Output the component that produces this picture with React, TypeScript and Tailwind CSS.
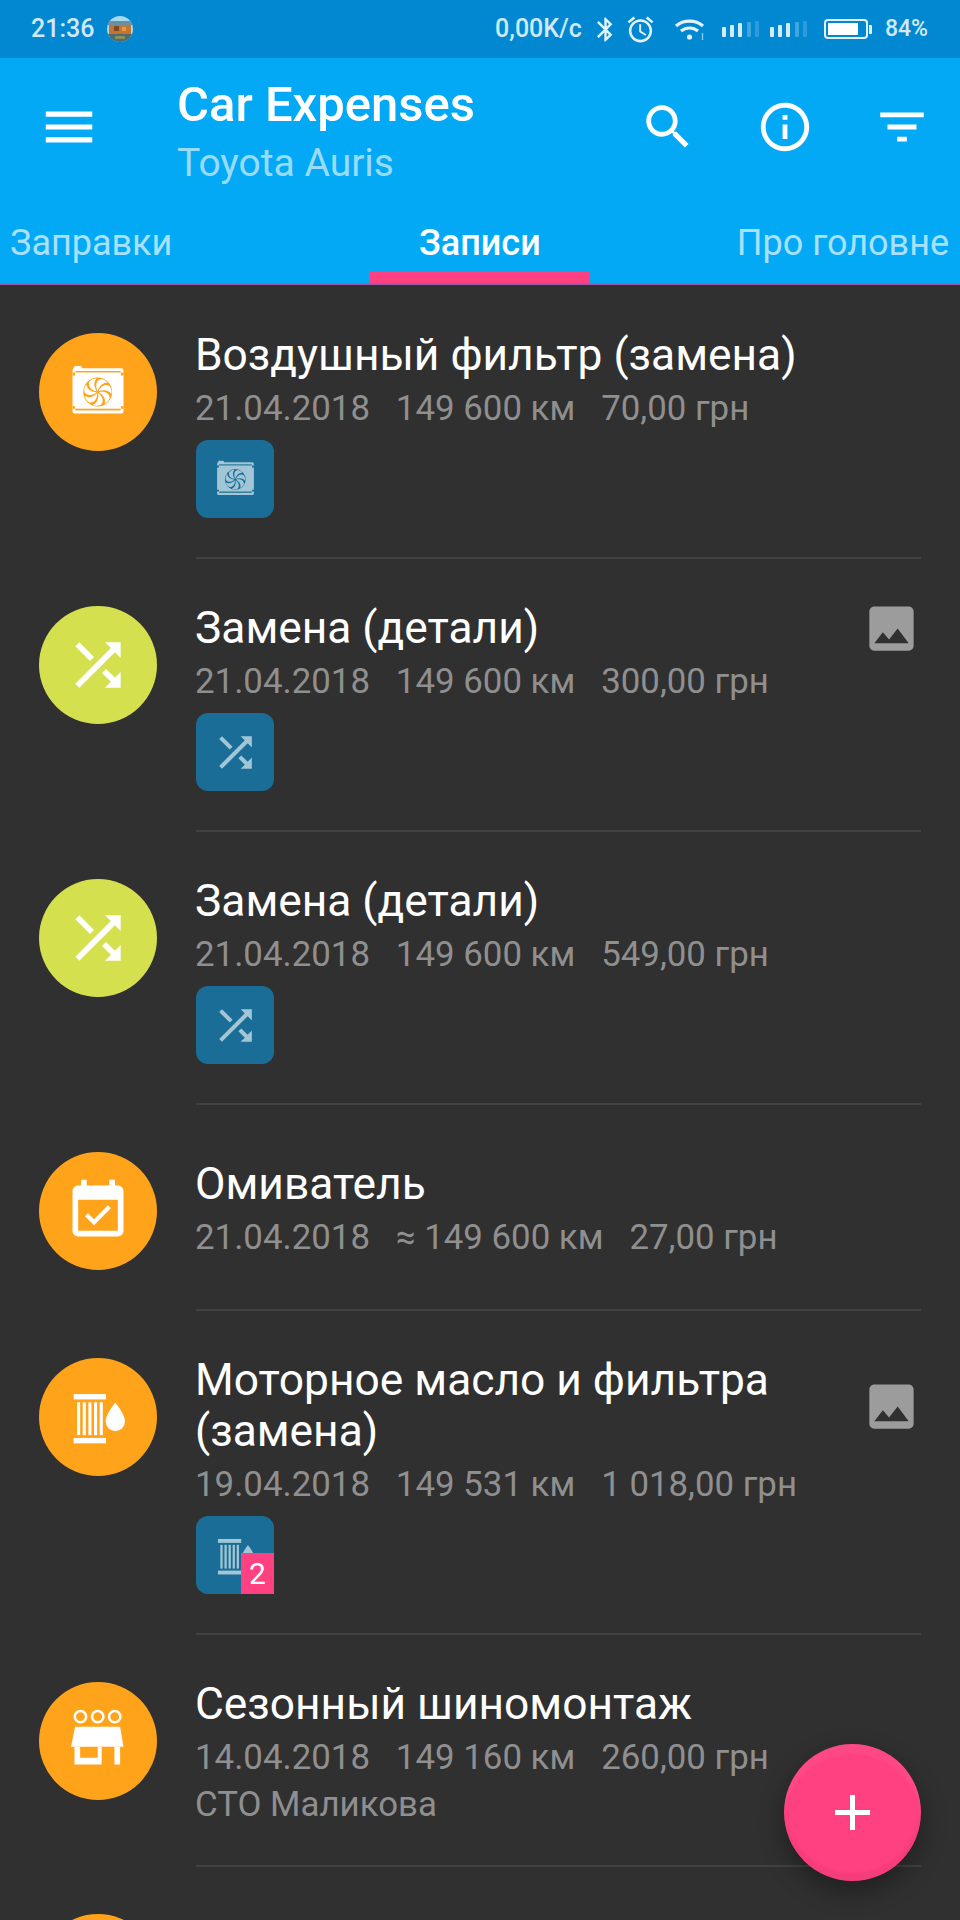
import React from "react";

// Material icon paths (24x24)
const SHUFFLE =
  "M10.59 9.17L5.41 4 4 5.41l5.17 5.17 1.42-1.41zM14.5 4l2.04 2.04L4 18.59 5.41 20 17.96 7.46 20 9.5V4h-5.5zm.33 9.41l-1.41 1.41 3.13 3.13L14.5 20H20v-5.5l-2.04 2.04-3.13-3.13z";
const EVENT =
  "M16.53 11.06L15.47 10l-4.88 4.88-2.12-2.12-1.06 1.06L10.59 17l5.94-5.94zM19 3h-1V1h-2v2H8V1H6v2H5c-1.11 0-1.99.9-1.99 2L3 19c0 1.1.89 2 2 2h14c1.1 0 2-.9 2-2V5c0-1.1-.9-2-2-2zm0 16H5V8h14v11z";
const IMAGE =
  "M21 19V5c0-1.1-.9-2-2-2H5c-1.1 0-2 .9-2 2v14c0 1.1.9 2 2 2h14c1.1 0 2-.9 2-2zM8.5 13.5l2.5 3.01L14.5 12l4.5 6H5l3.5-4.5z";

type IconKind = "radiator" | "shuffle" | "event" | "oil" | "shop";

function GlyphIcon({ kind, size, color, cut }: { kind: IconKind; size: number; color: string; cut: string }) {
  return (
    <svg width={size} height={size} viewBox="0 0 24 24" fill={color}>
      {kind === "shuffle" && <path d={SHUFFLE} />}
      {kind === "event" && <path d={EVENT} />}
      {kind === "radiator" && (
        <>
          <rect x="3" y="3.6" width="18" height="16" rx="0.8" />
          <rect x="3.4" y="2.8" width="3" height="2" rx="0.7" />
          <rect x="4" y="4.6" width="16" height="0.5" fill={cut} />
          <rect x="3" y="5.1" width="0.9" height="1.1" fill={cut} />
          <rect x="20.1" y="5.1" width="0.9" height="1.1" fill={cut} />
          <rect x="4" y="17.9" width="16" height="0.6" fill={cut} />
          <rect x="3" y="17" width="0.9" height="0.9" fill={cut} />
          <rect x="20.1" y="17" width="0.9" height="0.9" fill={cut} />
          <circle cx="11.9" cy="12" r="5.1" fill={cut} />
          {[0, 51.4, 102.8, 154.3, 205.7, 257.1, 308.6].map((a) => (
            <path
              key={a}
              d="M11.9 11.6C11 10 11.2 7.9 13 7.4C14.4 7.6 15 8.1 15.4 8.7C13.8 8.6 12.6 9.6 11.9 11.6z"
              transform={`rotate(${a} 11.9 12)`}
            />
          ))}
        </>
      )}
      {kind === "oil" && (
        <>
          <rect x="3.4" y="3.9" width="11.4" height="1.9" />
          <rect x="3.4" y="19.4" width="11.4" height="1.9" />
          <rect x="4.6" y="6.8" width="1.1" height="11.6" />
          <rect x="6.6" y="6.8" width="1.1" height="11.6" />
          <rect x="8.6" y="6.8" width="1.1" height="11.6" />
          <rect x="10.6" y="6.8" width="1.1" height="11.6" />
          <rect x="12.6" y="6.8" width="1.1" height="11.6" />
          <path d="M18.1 7C18.1 7 21.5 11 21.5 13.6A3.4 3.4 0 0 1 14.7 13.6C14.7 11 18.1 7 18.1 7z" />
        </>
      )}
      {kind === "shop" && (
        <>
          <circle cx="5.8" cy="3.4" r="2" fill="none" stroke={color} strokeWidth="0.9" />
          <circle cx="11.9" cy="3.4" r="2" fill="none" stroke={color} strokeWidth="0.9" />
          <circle cx="17.9" cy="3.4" r="2" fill="none" stroke={color} strokeWidth="0.9" />
          <path d="M3.9 7H19.8L21 14H2.5z" />
          <path d="M3.7 14H5.7V17.9H11.9V14H13.3V20.3H3.7z" />
          <rect x="17.8" y="14" width="2" height="6.3" />
        </>
      )}
    </svg>
  );
}

type Rec = {
  title: string;
  details: string;
  kind: IconKind;
  bg: string;
  chip?: boolean;
  badge?: string;
  photo?: boolean;
  extra?: string;
};

const ORANGE = "#ffa31a";
const LIME = "#d4e04e";
const CHIP = "#196d96";

const records: Rec[] = [
  { title: "Воздушный фильтр (замена)", details: "21.04.2018   149 600 км   70,00 грн", kind: "radiator", bg: ORANGE, chip: true },
  { title: "Замена (детали)", details: "21.04.2018   149 600 км   300,00 грн", kind: "shuffle", bg: LIME, chip: true, photo: true },
  { title: "Замена (детали)", details: "21.04.2018   149 600 км   549,00 грн", kind: "shuffle", bg: LIME, chip: true },
  { title: "Омиватель", details: "21.04.2018   ≈ 149 600 км   27,00 грн", kind: "event", bg: ORANGE },
  { title: "Моторное масло и фильтра (замена)", details: "19.04.2018   149 531 км   1 018,00 грн", kind: "oil", bg: ORANGE, chip: true, badge: "2", photo: true },
  { title: "Сезонный шиномонтаж", details: "14.04.2018   149 160 км   260,00 грн", kind: "shop", bg: ORANGE, extra: "СТО Маликова" },
  { title: "Салонный фильтр (замена)", details: "14.04.2018   149 160 км   300,00 грн", kind: "radiator", bg: ORANGE, photo: true },
];

function RecordRow({ rec }: { rec: Rec }) {
  return (
    <div className="flex pl-[39px] pr-[39px]">
      <div className="pt-[47px] pb-[41px] shrink-0">
        <div
          className="w-[118px] h-[118px] rounded-full flex items-center justify-center"
          style={{ backgroundColor: rec.bg }}
        >
          <GlyphIcon kind={rec.kind} size={68} color="#ffffff" cut={rec.bg} />
        </div>
      </div>
      <div className="ml-[39px] flex-1 min-w-0 flex flex-col justify-center border-b-2 border-[#424242] pt-[44px] pb-[39px]">
        <div className="flex items-center">
          <div className="flex-1 min-w-0 text-[44.3px] leading-[51px] text-white -ml-[1px]">{rec.title}</div>
          {rec.photo && (
            <svg width="59" height="59" viewBox="0 0 24 24" fill="#9c9c9c" className="shrink-0 -my-[4px]">
              <path d={IMAGE} />
            </svg>
          )}
        </div>
        <div className="mt-[4px] -mb-[1px] -ml-[1px] text-[34.85px] leading-[48px] text-[#8f8f8f] whitespace-pre">{rec.details}</div>
        {rec.extra && <div className="mt-[3px] -ml-[1px] text-[34.85px] leading-[42px] text-[#8f8f8f]">{rec.extra}</div>}
        {rec.chip && (
          <div className="relative mt-[8px] w-[78px] h-[78px] rounded-xl bg-[#196d96] flex items-center justify-center">
            <GlyphIcon kind={rec.kind} size={49} color="#a3c6d6" cut={CHIP} />
            {rec.badge && (
              <div className="absolute right-0 bottom-0 w-[33px] h-[41px] bg-[#ff4081] text-white text-[30px] leading-[41px] text-center">
                {rec.badge}
              </div>
            )}
          </div>
        )}
      </div>
    </div>
  );
}

function SignalBars() {
  return (
    <div className="flex items-end gap-[4.25px] h-[16px]">
      <div className="w-[4px] h-[10px] bg-[#d4ecfa] rounded-[1px]" />
      <div className="w-[4px] h-[12px] bg-[#d4ecfa] rounded-[1px]" />
      <div className="w-[4px] h-[14px] bg-[#d4ecfa] rounded-[1px]" />
      <div className="w-[4px] h-[15px] bg-[#d4ecfa]/30 rounded-[1px]" />
      <div className="w-[4px] h-[16px] bg-[#d4ecfa]/20 rounded-[1px]" />
    </div>
  );
}

function StatusBar() {
  return (
    <div className="h-[58px] bg-[#0288d1] flex items-center text-[#cfe9f9] text-[25px] font-medium">
      <span className="ml-[31px]">21:36</span>
      <svg width="26" height="26" viewBox="0 0 26 26" className="ml-[13px]">
        <defs>
          <clipPath id="avatar-clip">
            <circle cx="13" cy="13" r="13" />
          </clipPath>
        </defs>
        <g clipPath="url(#avatar-clip)">
          <rect width="26" height="26" fill="#a8d8ec" />
          <rect y="5" width="26" height="4" fill="#6d8fa3" />
          <rect x="2" y="9" width="22" height="9" fill="#c4762f" />
          <rect x="7" y="10" width="5" height="5" fill="#7a4a2a" />
          <rect x="15" y="11" width="4" height="4" fill="#e09a4a" />
          <rect y="18" width="26" height="8" fill="#4f6b70" />
          <rect x="8" y="20" width="10" height="3" fill="#8a8f5a" />
        </g>
      </svg>
      <span className="ml-auto">0,00K/с</span>
      <svg width="29" height="29" viewBox="0 0 24 24" fill="#e3f2fc" className="ml-[9px]">
        <path d="M17.71 7.71L12 2h-1v7.59L6.41 5 5 6.41 10.59 12 5 17.59 6.41 19 11 14.41V22h1l5.71-5.71-4.3-4.29 4.3-4.29zM13 5.83l1.88 1.88L13 9.59V5.83zm1.88 10.46L13 18.17v-3.76l1.88 1.88z" />
      </svg>
      <svg width="31" height="31" viewBox="0 0 24 24" fill="#e3f2fc" className="ml-[5px]">
        <path d="M22 5.72l-4.6-3.86-1.29 1.53 4.6 3.86L22 5.72zM7.88 3.39L6.6 1.86 2 5.71l1.29 1.53 4.59-3.85zM12.5 8H11v6l4.75 2.85.75-1.23-4-2.37V8zM12 4c-4.97 0-9 4.03-9 9s4.03 9 9 9c4.97 0 9-4.03 9-9s-4.03-9-9-9zm0 16c-3.87 0-7-3.13-7-7s3.13-7 7-7 7 3.13 7 7-3.13 7-7 7z" />
      </svg>
      <svg width="32" height="24" viewBox="0 0 32 24" fill="none" stroke="#e3f2fc" strokeWidth="3.2" className="ml-[18px]">
        <path d="M2 9C9.5 2.5 21.5 2.5 29 9" />
        <path d="M7 14C12 10 19 10 24 14" />
        <circle cx="15.5" cy="20" r="2.6" fill="#e3f2fc" stroke="none" />
        <path d="M28.5 16V23" stroke="#8cc6e8" strokeWidth="1.4" />
      </svg>
      <div className="ml-[16px]">
        <SignalBars />
      </div>
      <div className="ml-[11px]">
        <SignalBars />
      </div>
      <div className="ml-[17px] flex items-center">
        <div className="w-[44px] h-[20px] rounded-[4px] border-2 border-[#e3f2fc] p-[2px]">
          <div className="w-[84%] h-full bg-[#ffffff]" />
        </div>
        <div className="ml-[1px] w-[3px] h-[9px] bg-[#e3f2fc] rounded-r-[1px]" />
      </div>
      <span className="ml-[13px] mr-[32px] text-[23px]">84%</span>
    </div>
  );
}

function AppHeader() {
  return (
    <div className="bg-[#03a9f4]">
      <div className="h-[138px] flex items-center pr-[29px]">
        <svg width="62" height="62" viewBox="0 0 24 24" fill="#ffffff" className="ml-[38px] shrink-0">
          <path d="M3 18h18v-2H3v2zm0-5h18v-2H3v2zm0-7v2h18V6H3z" />
        </svg>
        <div className="ml-[77px] self-start pt-[22px]">
          <div className="text-[49px] leading-[50px] font-medium text-white">Car Expenses</div>
          <div className="mt-[8px] text-[39px] leading-[50px] text-white/60">Toyota Auris</div>
        </div>
        <div className="ml-auto flex items-center gap-[59px]">
          <svg width="58" height="58" viewBox="0 0 24 24" fill="#ffffff">
            <path d="M15.5 14h-.79l-.28-.27C15.41 12.59 16 11.11 16 9.5 16 5.91 13.09 3 9.5 3S3 5.91 3 9.5 5.91 16 9.5 16c1.61 0 3.09-.59 4.23-1.57l.27.28v.79l5 4.99L20.49 19l-4.99-5zm-6 0C7.01 14 5 11.99 5 9.5S7.01 5 9.5 5 14 7.01 14 9.5 11.99 14 9.5 14z" />
          </svg>
          <svg width="58" height="58" viewBox="0 0 24 24" fill="#ffffff">
            <path d="M11 7h2v2h-2zm0 4h2v6h-2zm1-9C6.48 2 2 6.48 2 12s4.48 10 10 10 10-4.48 10-10S17.52 2 12 2zm0 18c-4.41 0-8-3.59-8-8s3.59-8 8-8 8 3.59 8 8-3.59 8-8 8z" />
          </svg>
          <svg width="58" height="58" viewBox="0 0 24 24" fill="#ffffff">
            <path d="M10 18h4v-2h-4v2zM3 6v2h18V6H3zm3 7h12v-2H6v2z" />
          </svg>
        </div>
      </div>
      <div className="h-[89px] flex pl-[10px] pr-[11px] border-b-2 border-[#9a5fa8] text-[36px] leading-[44px] text-[#a9e0fb]">
        <div className="pt-[25px]">Заправки</div>
        <div className="ml-[197px] w-[221px] flex flex-col items-center pt-[25px] text-white font-medium">
          <span>Записи</span>
          <div className="mt-auto w-full h-[11px] bg-[#ff4081]" />
        </div>
        <div className="ml-auto pt-[25px]">Про головне</div>
      </div>
    </div>
  );
}

export default function App() {
  return (
    <div className="relative w-[960px] h-[1920px] overflow-hidden bg-[#303030] font-['Roboto',sans-serif]">
      <StatusBar />
      <AppHeader />
      <div className="pt-[1px]">
        {records.map((rec, i) => (
          <RecordRow key={i} rec={rec} />
        ))}
      </div>
      <button className="absolute left-[784px] top-[1744px] w-[137px] h-[137px] rounded-full bg-[#ff4081] flex items-center justify-center shadow-[inset_0_10px_3px_rgba(255,255,255,0.05),inset_0_-8px_3px_rgba(0,0,0,0.04),0_10px_24px_rgba(0,0,0,0.35)]">
        <svg width="35" height="35" viewBox="0 0 35 35" fill="#ffffff">
          <rect x="15" width="5" height="35" />
          <rect y="15" width="35" height="5" />
        </svg>
      </button>
    </div>
  );
}
